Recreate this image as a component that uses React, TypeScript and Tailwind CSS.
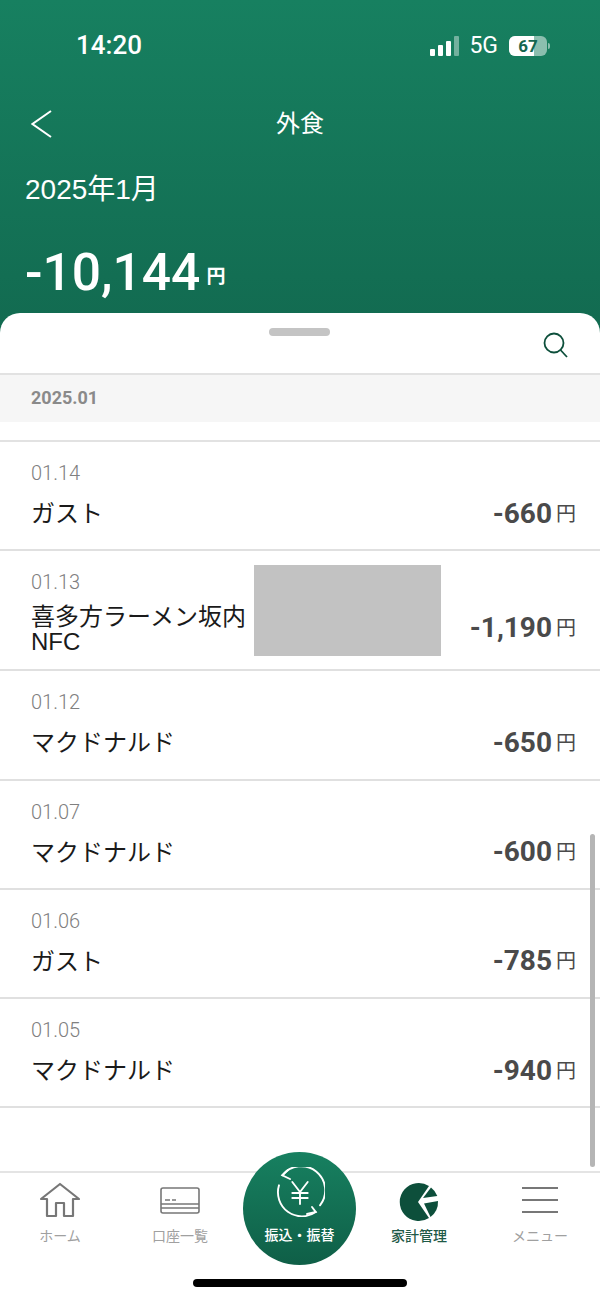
const jp = "font-['Liberation_Sans','Noto_Sans_CJK_JP',sans-serif]"

const rows = [
  { date: '01.14', name: 'ガスト', amount: '-660' },
  { date: '01.13', name: '喜多方ラーメン坂内\nNFC', amount: '-1,190', masked: true },
  { date: '01.12', name: 'マクドナルド', amount: '-650' },
  { date: '01.07', name: 'マクドナルド', amount: '-600' },
  { date: '01.06', name: 'ガスト', amount: '-785' },
  { date: '01.05', name: 'マクドナルド', amount: '-940' },
]

function StatusBar() {
  return (
    <div className="flex h-[90px] items-start justify-between pl-[76px] pr-[50px] pt-[29px] text-white">
      <span className="font-['Roboto',sans-serif] text-[26px] font-medium leading-[32px]">14:20</span>
      <div className="flex items-center gap-[10px] pt-[5px]">
        <div className="flex items-end gap-[3px]">
          <span className="h-[7px] w-[5px] rounded-[1px] bg-white" />
          <span className="h-[11px] w-[5px] rounded-[1px] bg-white" />
          <span className="h-[15px] w-[5px] rounded-[1px] bg-white" />
          <span className="h-[20px] w-[5px] rounded-[1px] bg-white/40" />
        </div>
        <span className="font-['Roboto',sans-serif] text-[23px] leading-[24px]">5G</span>
        <div className="ml-[1px] flex items-center gap-[1px]">
          <div className="relative flex h-[20px] w-[38px] items-center justify-center overflow-hidden rounded-[6px] bg-white/50">
            <span className="absolute bottom-0 left-0 top-0 w-[25px] bg-white" />
            <span className="relative font-['Roboto',sans-serif] text-[17px] font-bold leading-[20px] text-[#14664f]">67</span>
          </div>
          <span className="h-[6px] w-[2px] rounded-r-sm bg-white/50" />
        </div>
      </div>
    </div>
  )
}

function Header() {
  return (
    <div className="h-[340px] bg-gradient-to-b from-[#178060] to-[#126a50] text-white">
      <StatusBar />
      <div className="relative flex h-[68px] items-center justify-center">
        <svg className="absolute left-[31px] top-[20px]" width="21" height="28" viewBox="0 0 21 28" fill="none" stroke="white" strokeWidth="2">
          <path d="M20 1 L1.5 14 L20 27" />
        </svg>
        <span className={`${jp} text-[24px]`}>外食</span>
      </div>
      <div className={`${jp} px-[25px] pt-[14px] text-[28px] leading-[36px]`}>2025年1月</div>
      <div className="flex items-baseline px-[25px] pt-[37px]">
        <span className="font-['Roboto',sans-serif] text-[51.5px] font-medium leading-[56px]">-10,144</span>
        <span className={`${jp} ml-[6px] -translate-y-[7px] text-[19px] font-bold`}>円</span>
      </div>
    </div>
  )
}

function Row({ date, name, amount, masked }: { date: string; name: string; amount: string; masked?: boolean }) {
  return (
    <div className={`relative flex items-center justify-between border-b-2 border-[#e0e0e0] pl-[31px] pr-[24px] ${masked ? 'h-[120px]' : 'h-[109.25px]'}`}>
      <div className="self-start pt-[19px]">
        <div className="font-['Roboto',sans-serif] text-[20px] font-light leading-[24px] text-[#808080]">{date}</div>
        <div className={`${jp} whitespace-pre-line text-[24px] leading-[25px] text-[#1a1a1a] ${masked ? 'mt-[10px]' : 'mt-[16px]'}`}>{name}</div>
      </div>
      <div className="flex items-baseline pt-[36px] text-[#4a4a4a]">
        <span className="font-['Roboto',sans-serif] text-[28px] font-bold leading-[36px]">{amount}</span>
        <span className={`${jp} ml-[4px] -translate-y-[2px] text-[20px]`}>円</span>
      </div>
      {masked && <div className="absolute left-[254px] top-[14px] h-[91px] w-[187px] bg-[#c2c2c2]" />}
    </div>
  )
}

function HomeIcon() {
  return (
    <svg width="42" height="36" viewBox="0 0 42 36" fill="none" stroke="#777" strokeWidth="2.2" strokeLinejoin="round">
      <path d="M2 17 L21 2 L40 17 L34 17 L34 34 L25 34 L25 21 L17 21 L17 34 L8 34 L8 17 Z" />
    </svg>
  )
}

function CardIcon() {
  return (
    <svg width="40" height="27" viewBox="0 0 40 27" fill="none" stroke="#777" strokeWidth="1.6">
      <rect x="1" y="1" width="38" height="25" rx="2" />
      <path d="M1 17 H39 M1 21 H39" />
      <path d="M5 13 H10 M12 13 H16" />
    </svg>
  )
}

function PieIcon() {
  return (
    <svg className="-ml-[3px] mt-[4px]" width="40" height="40" viewBox="0 0 40 40" fill="#0d4f3b">
      <path d="M30 4 A19 19 0 1 0 30 36 L19 20 Z" />
      <path d="M24 16 L32 5.5 A19 19 0 0 1 38.3 14 Z" />
      <path d="M25 21.5 L39 19 A19 19 0 0 1 31.5 35 Z" />
    </svg>
  )
}

function TabItem({ label, active, children }: { label: string; active?: boolean; children: React.ReactNode }) {
  return (
    <div className="flex w-[120px] flex-col items-center">
      <div className="flex h-[38px] items-center justify-center">{children}</div>
      <span className={`font-['Noto_Sans_CJK_JP',sans-serif] mt-[6px] text-[14px] leading-[20px] ${active ? '-ml-[2px] font-medium text-[#1f5a47]' : 'text-[#a0a0a0]'}`}>{label}</span>
    </div>
  )
}

function TransferButton() {
  return (
    <div className="absolute left-[243px] top-[-21px] flex h-[113px] w-[113px] flex-col items-center rounded-full bg-gradient-to-b from-[#178060] to-[#0f5f47] pt-[15px] text-white">
      <svg width="50" height="50" viewBox="0 0 50 50" fill="none" stroke="white" strokeWidth="1.9" strokeLinecap="round">
        <path d="M7.3 8.3 A24 24 0 0 1 45 38.3" />
        <path d="M13 3 L7.3 8.3 L15 12" />
        <path d="M4 18.3 A24 24 0 0 0 40.7 45" />
        <path d="M37 40 L40.7 45 L32 47" />
        <path d="M17.3 15 L25 25 L32.7 15 M25 25 V37 M17.3 26 H32.7 M17.3 31 H32.7" />
      </svg>
      <span className="mt-[7px] font-['Noto_Sans_CJK_JP',sans-serif] text-[14px] font-medium leading-[20px]">振込・振替</span>
    </div>
  )
}

export default function App() {
  return (
    <div className="relative flex h-[1299px] w-[600px] flex-col overflow-hidden bg-white">
      <Header />
      <div className="relative z-10 mt-[-27px] flex flex-1 flex-col rounded-t-[20px] bg-white">
        <div className="relative h-[62px] border-b-2 border-[#e2e2e2]">
          <span className="absolute left-[269px] top-[15px] h-[8px] w-[61px] rounded-full bg-[#c4c4c4]" />
          <svg className="absolute left-[543px] top-[19px]" width="26" height="26" viewBox="0 0 26 26" fill="none" stroke="#0d4f3b" strokeWidth="1.8">
            <circle cx="11" cy="11" r="9.5" />
            <path d="M17.5 18 L24 25" />
          </svg>
        </div>
        <div className="flex h-[47px] shrink-0 items-center bg-[#f6f6f6] pb-[2px] pl-[31px] font-['Roboto',sans-serif] text-[18px] font-bold text-[#8a8a8a]">2025.01</div>
        <div className="h-[20px] shrink-0 border-b-2 border-[#e2e2e2]" />
        {rows.map((r) => (
          <Row key={r.date} {...r} />
        ))}
        <div className="absolute right-[5px] top-[521px] h-[333px] w-[5px] rounded-full bg-[#b5b5b5]" />
      </div>
      <div className="relative z-20 flex h-[128px] border-t-2 border-[#e4e4e4] bg-white pt-[8px]">
        <TabItem label="ホーム"><HomeIcon /></TabItem>
        <TabItem label="口座一覧"><CardIcon /></TabItem>
        <div className="w-[120px]" />
        <TabItem label="家計管理" active><PieIcon /></TabItem>
        <TabItem label="メニュー">
          <svg width="36" height="26" viewBox="0 0 36 26" stroke="#777" strokeWidth="2"><path d="M0 1 H36 M0 13 H36 M0 25 H36" /></svg>
        </TabItem>
        <TransferButton />
        <span className="absolute bottom-[12px] left-[193px] h-[8px] w-[214px] rounded-full bg-black" />
      </div>
    </div>
  )
}
